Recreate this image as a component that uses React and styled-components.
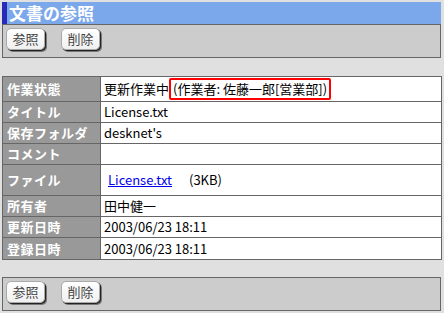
import React from "react";
import styled, { createGlobalStyle } from "styled-components";

const Global = createGlobalStyle`
  html, body { margin: 0; padding: 0; background: #e0e0e0; }
  body { padding: 2px; font-family: "Noto Sans CJK JP", "Noto Sans", sans-serif; font-size: 13px; color: #000; }
`;

const Page = styled.div`
  width: 439px;
  display: flex;
  flex-direction: column;
`;

const TitleBar = styled.div`
  height: 22px;
  background: #7ba7eb;
  border-left: 5px solid #2a2ab8;
  padding-left: 2px;
  color: #fff;
  font-size: 17px;
  font-weight: bold;
  line-height: 22px;
`;

const Toolbar = styled.div`
  box-sizing: border-box;
  height: 34px;
  background: #cccccc;
  border: 1px solid #666;
  display: flex;
  align-items: flex-start;
  gap: 16px;
  padding: 3px 3px 0;
  margin-top: ${(p) => p.$top || 0}px;
`;

const Button = styled.button`
  width: 39px;
  height: 22px;
  padding: 0;
  box-sizing: border-box;
  border: 1px solid #aaa;
  border-radius: 5px;
  background: linear-gradient(#ffffff, #f0f0f0);
  box-shadow: 1px 1px 0 #222, 2px 2px 0 #777;
  color: #444;
  font-family: "Noto Sans CJK JP", sans-serif;
  font-size: 13px;
  line-height: 18px;
  cursor: pointer;
`;

const Table = styled.table`
  margin-top: 18px;
  width: 440px;
  border-collapse: collapse;
  background: #fff;
`;

const Label = styled.th`
  width: 98px;
  background: #999999;
  color: #fff;
  font-weight: bold;
  letter-spacing: 0.5px;
  text-align: left;
  border: 1px solid #666;
  padding: 0 0 0 4px;
  height: ${(p) => p.$h}px;
  box-sizing: border-box;
  line-height: 16px;
  white-space: nowrap;
`;

const Value = styled.td`
  border: 1px solid #666;
  padding: 0 0 0 3px;
  height: ${(p) => p.$h}px;
  box-sizing: border-box;
  line-height: 16px;
  vertical-align: middle;
  white-space: nowrap;
`;

const Worker = styled.span`
  display: inline-block;
  border: 2px solid #f00;
  border-radius: 2px;
  padding: 1px 2px;
  line-height: 16px;
`;

const FileLine = styled.div`
  display: flex;
  align-items: center;
  gap: 17px;
  padding-left: 4px;
`;

const FileLink = styled.a`
  color: #0000ee;
  text-decoration: underline;
`;

const rows = [
  { k: "タイトル", v: "License.txt", h: 21 },
  { k: "保存フォルダ", v: "desknet's", h: 21 },
  { k: "コメント", v: "", h: 21 },
];
const rows2 = [
  { k: "所有者", v: "田中健一", h: 21 },
  { k: "更新日時", v: "2003/06/23 18:11", h: 21 },
  { k: "登録日時", v: "2003/06/23 18:11", h: 22 },
];

export default function App() {
  return (
    <>
      <Global />
      <Page>
        <TitleBar>文書の参照</TitleBar>
        <Toolbar>
          <Button>参照</Button>
          <Button>削除</Button>
        </Toolbar>
        <Table>
          <tbody>
            <tr>
              <Label $h={25}>作業状態</Label>
              <Value $h={25}>
                更新作業中<Worker>(作業者: 佐藤一郎[営業部])</Worker>
              </Value>
            </tr>
            {rows.map((r) => (
              <tr key={r.k}>
                <Label $h={r.h}>{r.k}</Label>
                <Value $h={r.h}>{r.v}</Value>
              </tr>
            ))}
            <tr>
              <Label $h={31}>ファイル</Label>
              <Value $h={31}>
                <FileLine>
                  <FileLink href="#">License.txt</FileLink>
                  <span>(3KB)</span>
                </FileLine>
              </Value>
            </tr>
            {rows2.map((r) => (
              <tr key={r.k}>
                <Label $h={r.h}>{r.k}</Label>
                <Value $h={r.h}>{r.v}</Value>
              </tr>
            ))}
          </tbody>
        </Table>
        <Toolbar $top={17}>
          <Button>参照</Button>
          <Button>削除</Button>
        </Toolbar>
      </Page>
    </>
  );
}
